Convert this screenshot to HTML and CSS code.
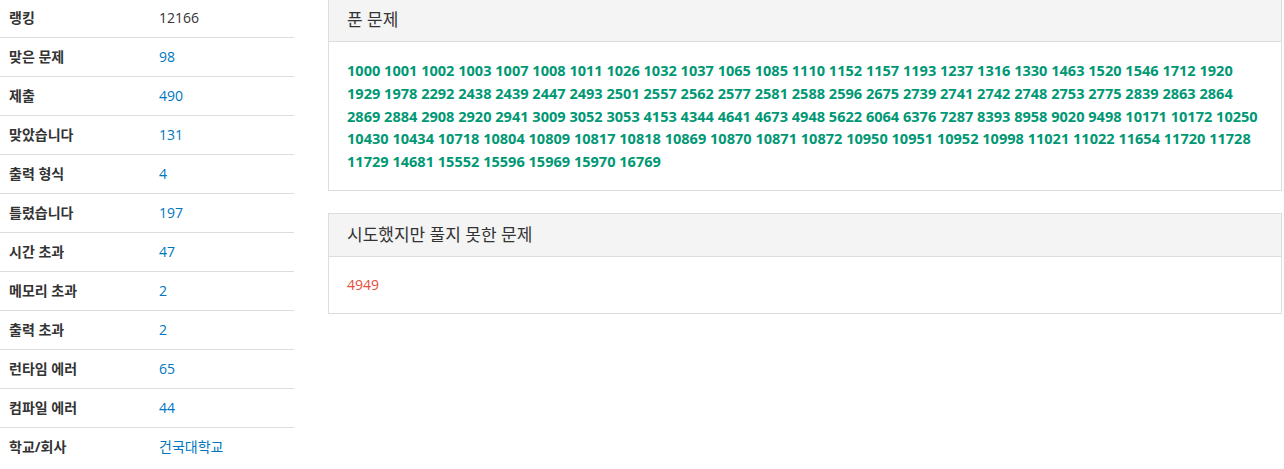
FILE: index.html
```html
<!DOCTYPE html>
<html>
<head>
<meta charset="UTF-8" />
<title>user</title>
    <link rel="stylesheet" href="styles.css">
</head>
    <body>
    <div class="page">

    <table class="stats">
        <tr><th>랭킹</th><td>12166</td></tr>
        <tr><th>맞은 문제</th><td><a href="#">98</a></td></tr>
        <tr><th>제출</th><td><a href="#">490</a></td></tr>
        <tr><th>맞았습니다</th><td><a href="#">131</a></td></tr>
        <tr><th>출력 형식</th><td><a href="#">4</a></td></tr>
        <tr><th>틀렸습니다</th><td><a href="#">197</a></td></tr>
        <tr><th>시간 초과</th><td><a href="#">47</a></td></tr>
        <tr><th>메모리 초과</th><td><a href="#">2</a></td></tr>
        <tr><th>출력 초과</th><td><a href="#">2</a></td></tr>
        <tr><th>런타임 에러</th><td><a href="#">65</a></td></tr>
        <tr><th>컴파일 에러</th><td><a href="#">44</a></td></tr>
        <tr><th>학교/회사</th><td><a href="#">건국대학교</a></td></tr>
    </table>

    <div class="panels">
        <div class="panel">
            <div class="panel-heading">푼 문제</div>
            <div class="panel-body problems solved" id="solved"></div>
        </div>
        <div class="panel">
            <div class="panel-heading">시도했지만 풀지 못한 문제</div>
            <div class="panel-body problems failed" id="failed"></div>
        </div>
    </div>

    </div>

    <script>
      const solved = [1000, 1001, 1002, 1003, 1007, 1008, 1011, 1026, 1032, 1037, 1065, 1085, 1110, 1152, 1157, 1193, 1237, 1316, 1330, 1463, 1520, 1546, 1712, 1920,
        1929, 1978, 2292, 2438, 2439, 2447, 2493, 2501, 2557, 2562, 2577, 2581, 2588, 2596, 2675, 2739, 2741, 2742, 2748, 2753, 2775, 2839, 2863, 2864,
        2869, 2884, 2908, 2920, 2941, 3009, 3052, 3053, 4153, 4344, 4641, 4673, 4948, 5622, 6064, 6376, 7287, 8393, 8958, 9020, 9498, 10171, 10172, 10250,
        10430, 10434, 10718, 10804, 10809, 10817, 10818, 10869, 10870, 10871, 10872, 10950, 10951, 10952, 10998, 11021, 11022, 11654, 11720, 11728,
        11729, 14681, 15552, 15596, 15969, 15970, 16769]
      const failed = [4949]

      function fill(id, list) {
        const box = document.getElementById(id)
        box.innerHTML = list.map(n => '<a href="#">' + n + '</a>').join(' ')
      }
      fill('solved', solved)
      fill('failed', failed)
    </script>

    </body>
</html>
```

FILE: styles.css
```css
body {
  margin: 0;
  font-family: "Open Sans", "Noto Sans CJK KR", sans-serif;
  font-size: 14px;
  color: #333;
  background: #fff;
}
a {
  color: #0076c0;
  text-decoration: none;
}
.page {
  display: flex;
  align-items: flex-start;
  gap: 34px;
  margin-top: -2px;
}
.stats {
  width: 294px;
  flex: none;
  border-collapse: collapse;
}
.stats th,
.stats td {
  padding: 8px 9px;
  line-height: 22px;
  border-top: 1px solid #ddd;
  text-align: left;
  vertical-align: top;
}
.stats th {
  width: 132px;
  font-weight: bold;
}
.stats tr:first-child th,
.stats tr:first-child td {
  border-top-color: transparent;
}
.panels {
  width: 954px;
  flex: none;
}
.panel {
  border: 1px solid #ddd;
  margin-bottom: 22px;
  background: #fff;
}
.panel-heading {
  background: #f4f4f4;
  border-bottom: 1px solid #ddd;
  padding: 10px 18px;
  font-size: 17px;
  line-height: 22px;
}
.panel-body {
  padding: 17px 18px;
  line-height: 22.75px;
}
.solved {
  font-size: 14.55px;
}
.solved a {
  color: #009874;
  font-weight: bold;
}
.failed {
  padding-top: 17px;
  padding-bottom: 16px;
}
.failed a {
  color: #e74c3c;
}
```
